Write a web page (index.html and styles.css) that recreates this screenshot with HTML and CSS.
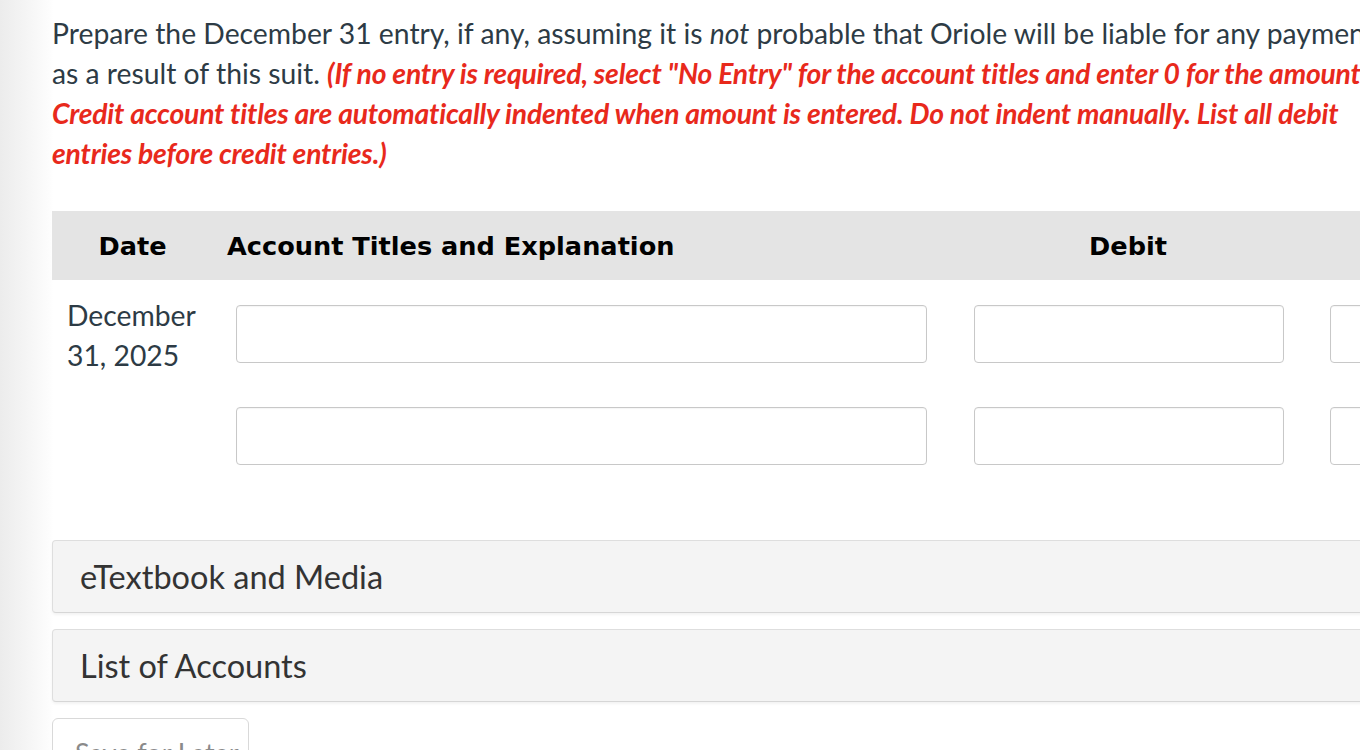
FILE: index.html
```html
<!DOCTYPE html>
<html lang="en">
<head>
<meta charset="utf-8">
<title>Journal Entry</title>
<link rel="stylesheet" href="styles.css">
</head>
<body>
<div class="page">
  <p class="question">Prepare the December 31 entry, if any, assuming it is <em>not</em> probable that Oriole will be liable for any payments as a result of this suit. <strong class="note">(If no entry is required, select "No Entry" for the account titles and enter 0 for the amounts. Credit account titles are automatically indented when amount is entered. Do not indent manually. List all debit entries before credit entries.)</strong></p>

  <div class="journal">
    <div class="jhead">
      <div class="hcell hdate">Date</div>
      <div class="hcell hacct">Account Titles and Explanation</div>
      <div class="hcell hnum">Debit</div>
      <div class="hcell hnum">Credit</div>
    </div>
    <div class="jrow">
      <div class="cdate">December<br>31, 2025</div>
      <div class="cacct"><input class="field facct" type="text"></div>
      <div class="cnum"><input class="field fnum" type="text"></div>
      <div class="cnum"><input class="field fnum" type="text"></div>
    </div>
    <div class="jrow">
      <div class="cdate"></div>
      <div class="cacct"><input class="field facct" type="text"></div>
      <div class="cnum"><input class="field fnum" type="text"></div>
      <div class="cnum"><input class="field fnum" type="text"></div>
    </div>
  </div>

  <div class="panels">
    <div class="panel">eTextbook and Media</div>
    <div class="panel">List of Accounts</div>
  </div>

  <button class="save" type="button">Save for Later</button>
</div>
</body>
</html>
```

FILE: styles.css
```css
html, body {
  margin: 0;
  padding: 0;
}
body {
  width: 1360px;
  height: 750px;
  overflow: hidden;
  background: linear-gradient(to right, #ececec 0px, #f6f6f6 30px, #fdfdfd 50px, #ffffff 53px);
  font-family: Lato, "Open Sans", sans-serif;
  color: #2d3b45;
}
.page {
  width: 1700px;
  padding: 13px 0 0 52px;
}
.question {
  margin: 0;
  width: 1348px;
  font-size: 28.3px;
  line-height: 40px;
}
.question em {
  font-style: italic;
}
.note {
  color: #e8291c;
  font-style: italic;
  font-weight: 700;
  letter-spacing: -0.2px;
}
.journal {
  margin-top: 38px;
}
.jhead {
  display: grid;
  grid-template-columns: 161px 737px 356px 356px;
  height: 69px;
  align-items: center;
  background: #e4e4e4;
  font-family: "DejaVu Sans", Verdana, sans-serif;
  font-weight: 700;
  font-size: 25.6px;
  color: #000;
}
.hdate, .hnum {
  text-align: center;
}
.hacct {
  padding-left: 14px;
}
.jrow {
  display: grid;
  grid-template-columns: 161px 737px 356px 356px;
  height: 102px;
}
.cdate {
  padding: 15px 0 0 15px;
  font-size: 28.3px;
  line-height: 40px;
  color: #2d3b45;
}
.cacct {
  padding: 25px 0 0 23px;
}
.cnum {
  padding: 25px 0 0 24px;
}
.field {
  box-sizing: border-box;
  height: 58px;
  margin: 0;
  border: 1px solid #c8c8c8;
  border-radius: 4px;
  background: #fff;
  box-shadow: inset 0 1px 1px rgba(0, 0, 0, 0.04);
  font: 26px Lato, sans-serif;
  padding: 0 12px;
}
.facct {
  width: 691px;
}
.fnum {
  width: 310px;
}
.panels {
  margin-top: 56px;
  display: flex;
  flex-direction: column;
  gap: 16px;
}
.panel {
  box-sizing: border-box;
  height: 73px;
  padding: 0 0 0 27px;
  display: flex;
  align-items: center;
  background: #f4f4f4;
  border: 1px solid #dedede;
  border-bottom-color: #d6d6d6;
  border-radius: 4px;
  box-shadow: 0 2px 3px rgba(0, 0, 0, 0.05);
  font-size: 32.5px;
  color: #333;
}
.save {
  margin-top: 16px;
  width: 197px;
  height: 56px;
  background: #fff;
  border: 1px solid #d9d9d9;
  border-radius: 6px;
  font-family: Lato, sans-serif;
  font-size: 27px;
  line-height: 32px;
  color: #8a8a8a;
  text-align: left;
  padding: 14px 0 0 22px;
  display: block;
  box-sizing: border-box;
  white-space: nowrap;
}
```
